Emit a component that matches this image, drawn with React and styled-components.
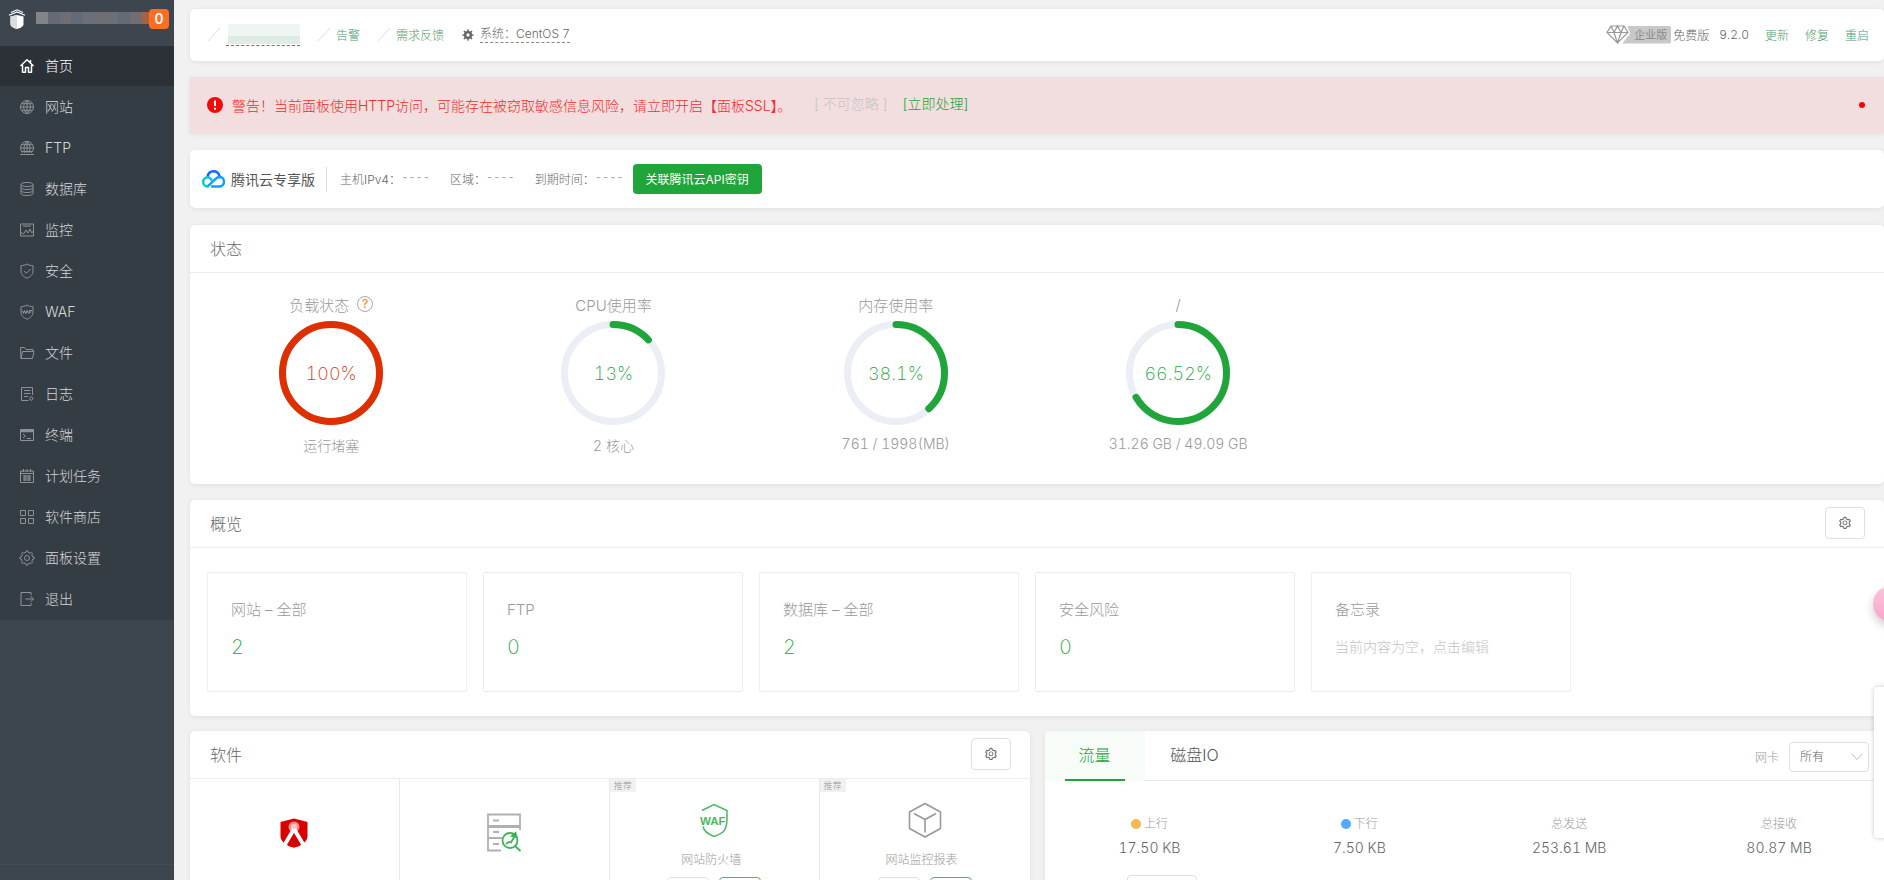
import React from "react";
import styled, { createGlobalStyle } from "styled-components";
import { AiOutlineSetting } from "react-icons/ai";

const COLORS = {
  green: "#20a53a",
  red: "#dd2f00",
  text: "#666",
  muted: "#999",
  light: "#ccc",
  line: "#ededed",
  lilac: "#e8e8f2",
};

const GlobalStyle = createGlobalStyle`
  * {
    box-sizing: border-box;
  }

  body {
    margin: 0;
    background: #f1f1f1;
    color: ${COLORS.text};
    font-family: Inter, "Noto Sans CJK SC", sans-serif;
    font-size: 12px;
    font-weight: 300;
    font-variant-numeric: tabular-nums;
  }

  a {
    color: inherit;
    text-decoration: none;
  }

  button,
  select {
    font: inherit;
    color: inherit;
  }

  h2,
  p,
  ul,
  dl,
  dd {
    margin: 0;
    padding: 0;
  }
`;

const Layout = styled.div`
  display: flex;
  height: 100vh;
`;

/* sidebar */

const Sidebar = styled.aside`
  display: flex;
  flex-direction: column;
  flex: none;
  width: 174px;
  background: #3d454e;
`;

const SidebarHeader = styled.div`
  display: flex;
  align-items: flex-start;
  height: 46px;
  padding: 9px 5px 0 8px;
`;

const Mosaic = styled.div`
  display: flex;
  flex: 1;
  height: 12px;
  margin: 3px 0 0 10px;

  i {
    flex: 1;
    background: #6b7077;
  }
  i:nth-child(1) {
    background: #838487;
  }
  i:nth-child(2n) {
    background: #646b76;
  }
  i:nth-child(3n) {
    background: #706d73;
  }
  i:last-child {
    flex: 0 0 7px;
    background: #a9623f;
  }
`;

const MessageCount = styled.span`
  width: 20px;
  height: 20px;
  border-radius: 4px;
  background: #ff6c24;
  color: #fff;
  font-size: 14px;
  font-weight: 600;
  line-height: 20px;
  text-align: center;
`;

const Menu = styled.ul`
  list-style: none;
  background: #353d44;
`;

const MenuLink = styled.a`
  display: flex;
  align-items: center;
  gap: 10px;
  height: 40px;
  margin-bottom: 1px;
  padding-left: 19px;
  background: ${({ $active }) => ($active ? "#2c3138" : "transparent")};
  color: ${({ $active }) => ($active ? "#fff" : "#d6d7d9")};
  font-size: 14px;

  svg {
    width: 16px;
    height: 16px;
    color: ${({ $active }) => ($active ? "#fff" : "#8f9396")};
  }

  span {
    padding-bottom: 2px;
  }
`;

const SidebarFooter = styled.div`
  height: 16px;
  margin-top: auto;
  border-top: 1px solid #404d56;
`;

/* shared */

const Main = styled.main`
  flex: 1;
  min-width: 0;
  padding: 9px 0 0 16px;
  overflow-y: auto;
  scrollbar-width: none;
`;

const Card = styled.section`
  margin-bottom: 16px;
  border-radius: 5px;
  background: #fff;
  box-shadow: 0 1px 5px rgba(0, 0, 0, 0.08);
`;

const CardHeader = styled.header`
  display: flex;
  align-items: center;
  justify-content: space-between;
  height: 48px;
  padding: 0 19px 2px 20px;
  border-bottom: 1px solid ${COLORS.line};

  h2 {
    font-size: 16px;
    font-weight: 300;
  }
`;

const SettingButton = styled.button`
  display: flex;
  align-items: center;
  justify-content: center;
  width: 40px;
  height: 32px;
  padding: 0;
  border: 1px solid #dcdfe6;
  border-radius: 4px;
  background: #fff;
  font-size: 14px;
`;

/* top bar */

const TopBar = styled(Card)`
  display: flex;
  align-items: center;
  justify-content: space-between;
  height: 52px;
  padding: 0 15px 0 18px;
`;

const TopGroup = styled.div`
  display: flex;
  align-items: center;
  gap: ${({ $right }) => ($right ? "16px" : "18px")};
  padding-bottom: 1px;
  color: #4fa06a;
`;

const TopItem = styled.div`
  display: flex;
  align-items: center;
  gap: 6px;
  color: ${({ $gray }) => ($gray ? COLORS.text : "#4fa06a")};
`;

const Account = styled.span`
  width: 74px;
  height: 22px;
  border-bottom: 1px dashed ${COLORS.green};
  background: linear-gradient(#eff5f1 0 60%, #dfece3 60%) no-repeat 2px 0 / 72px 20px;
`;

const System = styled.span`
  border-bottom: 1px dashed #888;
  line-height: 16px;
`;

const Edition = styled.div`
  display: flex;
  align-items: center;
  margin-right: -6px;
`;

const EditionTag = styled.span`
  height: 18px;
  margin: 0 2px 0 -7px;
  padding: 0 4px 0 12px;
  border-radius: 0 2px 2px 0;
  background: #c8c8c8;
  clip-path: polygon(5px 0, 100% 0, 100% 100%, 0 100%, 8px 45%);
  color: #888;
  font-size: 11px;
  font-weight: 400;
  line-height: 18px;
`;

/* warning */

const Alert = styled.div`
  display: flex;
  align-items: center;
  height: 56px;
  margin-bottom: 17px;
  padding: 0 19px 0 17px;
  background: #f2dede;
  box-shadow: 0 1px 5px rgba(0, 0, 0, 0.08);
  color: #f22b2b;
  font-size: 14px;

  p {
    margin: 0 22px 0 9px;
  }
`;

const Ignore = styled.span`
  margin-right: 14px;
  padding-bottom: 4px;
  color: #c4c4c4;
`;

const Handle = styled.a`
  padding-bottom: 4px;
  color: ${COLORS.green};
`;

const RedDot = styled.i`
  width: 6px;
  height: 6px;
  margin-left: auto;
  border-radius: 50%;
  background: #f00;
`;

/* tencent cloud */

const CloudBar = styled(Card)`
  display: flex;
  align-items: center;
  height: 58px;
  margin-bottom: 17px;
  padding: 0 12px;
`;

const CloudName = styled.strong`
  margin-left: 6px;
  padding-right: 11px;
  border-right: 1px solid #ddd;
  color: #555;
  font-size: 14px;
  font-weight: 400;
  line-height: 25px;
`;

const CloudFields = styled.dl`
  display: flex;
  gap: 20px;
  margin: 0 9px 0 13px;
  padding-bottom: 2px;

  div {
    display: flex;
    align-items: center;
  }
  dd {
    color: #aaa;
    font-family: "Liberation Mono", monospace;
  }
`;

const BindButton = styled.button`
  height: 30px;
  padding: 0 13px 1px;
  border: 0;
  border-radius: 4px;
  background: ${COLORS.green};
  color: #fff;
  font-weight: 400;
`;

/* status */

const Gauges = styled.div`
  display: grid;
  grid-template-columns: repeat(6, 1fr);
  padding: 19px 0 26px;
`;

const Gauge = styled.div`
  display: flex;
  flex-direction: column;
  align-items: center;
  height: 166px;
  color: ${COLORS.muted};
  font-size: 14px;
`;

const GaugeTitle = styled.div`
  display: flex;
  align-items: center;
  gap: 8px;
  height: 24px;
  font-size: 15px;
`;

const Help = styled.a`
  width: 16px;
  height: 16px;
  border: 1px solid #aaa;
  border-radius: 50%;
  color: #ff8d1a;
  font-size: 12px;
  font-weight: 500;
  line-height: 14px;
  text-align: center;
`;

const Ring = styled.div`
  display: grid;
  place-items: center;
  width: 104px;
  height: 104px;
  margin: 5px 0 10px;
  color: ${({ $color }) => $color};
  font-size: 18px;
  font-weight: 200;

  svg,
  span {
    grid-area: 1 / 1;
  }
`;

/* overview */

const Overview = styled.div`
  display: flex;
  gap: 16px;
  padding: 24px 17px;
`;

const OverviewBox = styled.div`
  width: 260px;
  height: 120px;
  padding: 24px 23px;
  border: 1px solid ${COLORS.line};
  border-radius: 2px;
  color: ${COLORS.muted};
  font-size: 15px;
  line-height: 26px;

  a {
    display: block;
    margin-top: 11px;
  }
`;

const Count = styled.a`
  color: ${COLORS.green};
  font-size: 20px;
  font-weight: 200;
`;

const Memo = styled.a`
  color: #c4c4c4;
  font-size: 14px;
`;

/* bottom row */

const BottomRow = styled.div`
  display: grid;
  grid-template-columns: 1fr 1fr;
  gap: 15px;
  margin-top: -1px;
`;

const SoftGrid = styled.div`
  display: grid;
  grid-template-columns: repeat(4, 1fr);
`;

const SoftItem = styled.div`
  position: relative;
  display: flex;
  flex-direction: column;
  align-items: center;
  height: 210px;
  padding-top: ${({ $plain }) => ($plain ? "33px" : "20px")};
  border-right: 1px solid ${COLORS.lilac};
  border-bottom: 1px solid ${COLORS.lilac};
  color: ${COLORS.muted};

  &:nth-child(4n) {
    border-right: 0;
  }

  p {
    width: ${({ $plain }) => ($plain ? "112px" : "auto")};
    margin-top: ${({ $plain }) => ($plain ? "23px" : "9px")};
    padding-right: 6px;
    line-height: 20px;
  }
`;

const Recommend = styled.span`
  position: absolute;
  top: 0;
  left: 0;
  width: 26px;
  background: #f1f1f1;
  color: #999;
  font-size: 9px;
  line-height: 13px;
  text-align: center;
`;

const SoftActions = styled.div`
  display: flex;
  gap: 10px;
  margin-top: 7px;
`;

const SoftButton = styled.button`
  width: 42px;
  height: 24px;
  padding: 0;
  border: 1px solid ${({ $green }) => ($green ? "#4fb563" : "#dcdfe6")};
  border-radius: 4px;
  background: #fff;
  color: ${({ $green }) => ($green ? COLORS.green : COLORS.text)};
`;

const Tabs = styled.div`
  display: flex;
  height: 50px;
  border-bottom: 1px solid ${COLORS.lilac};
`;

const Tab = styled.button`
  width: 100px;
  height: 50px;
  padding: 0 20px;
  border: 0;
  border-radius: 5px 0 0 0;
  background: ${({ $active }) => ($active ? "#f7fcf8" : "none")};
  color: ${({ $active }) => ($active ? COLORS.green : "#555")};
  font-size: 16px;

  span {
    display: block;
    border-bottom: 2px solid ${({ $active }) => ($active ? COLORS.green : "transparent")};
    line-height: 48px;
  }
`;

const NetFilter = styled.label`
  display: flex;
  align-items: center;
  gap: 10px;
  margin: 2px 15px 0 auto;
  color: ${COLORS.muted};
`;

const SelectBox = styled.span`
  display: grid;
  align-items: center;

  select,
  svg {
    grid-area: 1 / 1;
  }

  select {
    width: 80px;
    height: 30px;
    padding: 0 10px;
    border: 1px solid #dcdfe6;
    border-radius: 4px;
    background: #fff;
    color: ${COLORS.text};
    appearance: none;
  }

  svg {
    justify-self: end;
    margin-right: 6px;
    pointer-events: none;
  }
`;

const Stats = styled.dl`
  display: grid;
  grid-template-columns: repeat(4, 1fr);
  padding-top: 31px;
  text-align: center;
  line-height: 24px;

  dt {
    display: flex;
    align-items: center;
    justify-content: center;
    gap: 3px;
    color: ${COLORS.muted};
  }

  dd {
    font-size: 14px;
  }
`;

const Dot = styled.i`
  width: 10px;
  height: 10px;
  border-radius: 50%;
  background: ${({ $color }) => $color};
`;

const UnitSelect = styled.select`
  width: 70px;
  height: 28px;
  margin: 15px 0 200px 82px;
  border: 1px solid #dcdfe6;
  border-radius: 4px;
  background: #fff;
  appearance: none;
`;

/* floating helpers on the right edge */

const FloatBall = styled.button`
  position: fixed;
  top: 586px;
  right: -25px;
  width: 36px;
  height: 36px;
  border: 0;
  border-radius: 50%;
  background: linear-gradient(#fcc3dc, #f9a6cb);
  box-shadow: 0 4px 10px rgba(0, 0, 0, 0.2);
`;

const FloatPanel = styled.div`
  position: fixed;
  top: 687px;
  right: -30px;
  width: 40px;
  height: 151px;
  border-radius: 4px;
  background: #fff;
  box-shadow: 0 0 5px rgba(0, 0, 0, 0.22);
`;

const Svg = ({ size = 16, children, ...rest }) => (
  <svg
    width={size}
    height={size}
    viewBox="0 0 16 16"
    fill="none"
    stroke="currentColor"
    strokeWidth="1"
    strokeLinejoin="round"
    aria-hidden="true"
    {...rest}
  >
    {children}
  </svg>
);

// eight-toothed gear outline around (8, 8)
const gearPath = (outer, inner) => {
  const points = [];
  for (let i = 0; i < 8; i++) {
    [-0.25, -0.13, 0.13, 0.25].forEach((shift, j) => {
      const angle = ((i + shift) * Math.PI) / 4;
      const r = j === 0 || j === 3 ? inner : outer;
      points.push(`${(8 + r * Math.sin(angle)).toFixed(2)} ${(8 - r * Math.cos(angle)).toFixed(2)}`);
    });
  }
  return `M${points.join("L")}z`;
};

const SHIELD = "M8 1c2 1.2 4 1.6 6 1.7V8c0 3.600-2.500 5.800-6 7.200C4.500 13.800 2 11.600 2 8V2.700C4 2.600 6 2.200 8 1z";

const icons = {
  home: (
    <g strokeWidth="1.500">
      <path d="M1.500 8L8 1.700 14.500 8M3.500 7v7.200h3V9.500h3v4.700h3V7M11.500 2v2.500" />
    </g>
  ),
  site: (
    <path d="M8 1.500a6.500 6.500 0 100 13 6.500 6.500 0 000-13zM8 1.500v13M1.500 8h13M2.500 4.700h11M2.500 11.300h11M8 1.500c-4.500 3.500-4.500 9.500 0 13M8 1.500c4.500 3.500 4.500 9.500 0 13" />
  ),
  ftp: (
    <path d="M4 13a6.500 6.500 0 118 0M8 1.500v11.500M1.500 8h13M2.500 4.700h11M3 11.500h10M8 1.500C4.500 4.500 4.500 10 6 13M8 1.500c3.500 3 3.500 8.500 2 11.500M1 14.500h14" />
  ),
  database: (
    <path d="M2 3.500C2 .8 14 .8 14 3.500S2 6.200 2 3.500zM2 3.500v9c0 2.700 12 2.700 12 0v-9M2 6.500c0 2.700 12 2.700 12 0M2 9.500c0 2.700 12 2.700 12 0" />
  ),
  monitor: <path d="M1.500 2h13v12h-13zM4 4h8M2 10.500l2.500 1.500L7 8l2 3 2-4 1.500 3.500 2-1" />,
  safe: <path d={`${SHIELD}M5 8l2.300 2.300L11.500 6`} />,
  waf: <path d={`${SHIELD}M3.500 6.500l1 3 1-3 1 3 1-3M7.500 9.500L8.500 6.500l1 3M10.500 9.500v-3h2.500M10.500 8h2`} />,
  files: <path d="M2 13.500L1.500 2.500h4l1.500 2h7v2M2 13.500L3.500 6.500h11.500L13.500 13.500z" />,
  logs: (
    <g>
      <path d="M13.500 9V1.500h-11v13h7M5 4.500h6.500M5 7.500h6.500M5 10.500h4" />
      <circle cx="12.300" cy="12.500" r="1.700" />
    </g>
  ),
  terminal: (
    <g>
      <path d="M1.500 2.500h13v11h-13zM4 7l2.500 2L4 11M8 11.500h4" />
      <path d="M1.500 4h13" strokeWidth="2.500" />
    </g>
  ),
  cron: <path d="M1.500 3h13v11.500h-13zM1.500 5.500h13M4.500 1v3M8 1v3M11.500 1v3M4 8h8M4 10h8M4 12h8M6 7v6M10 7v6" />,
  store: <path d="M1.500 1.500h5v5h-5zM9.500 1.500h5v5h-5zM1.500 9.500h5v5h-5zM9.500 9.500h5v5h-5z" />,
  setting: (
    <g>
      <path d={gearPath(7.2, 5.8)} />
      <circle cx="8" cy="8" r="2.500" />
    </g>
  ),
  exit: <path d="M12 4V1.500H2v13h10V12M6.500 8h8M11.500 5l3 3-3 3" />,
};

const MENU = [
  ["home", "首页"],
  ["site", "网站"],
  ["ftp", "FTP"],
  ["database", "数据库"],
  ["monitor", "监控"],
  ["safe", "安全"],
  ["waf", "WAF"],
  ["files", "文件"],
  ["logs", "日志"],
  ["terminal", "终端"],
  ["cron", "计划任务"],
  ["store", "软件商店"],
  ["setting", "面板设置"],
  ["exit", "退出"],
];

const GAUGES = [
  { title: "负载状态", percent: 100, desc: "运行堵塞", color: COLORS.red, help: true },
  { title: "CPU使用率", percent: 13, desc: "2 核心", color: COLORS.green },
  { title: "内存使用率", percent: 38.1, desc: "761 / 1998(MB)", color: COLORS.green },
  { title: "/", percent: 66.52, desc: "31.26 GB / 49.09 GB", color: COLORS.green },
];

const OVERVIEW = [
  ["网站 – 全部", 2],
  ["FTP", 0],
  ["数据库 – 全部", 2],
  ["安全风险", 0],
];

const STATS = [
  ["上行", "17.50 KB", "#f7b851"],
  ["下行", "7.50 KB", "#52a9ff"],
  ["总发送", "253.61 MB"],
  ["总接收", "80.87 MB"],
];

const Logo = () => (
  <svg width="18" height="20" viewBox="0 0 18 20" aria-hidden="true">
    <path d="M2.500 7.500L9 6l6.500 1.500V15c0 2.500-3 4-6.500 5-3.500-1-6.500-2.500-6.500-5z" fill="#fff" />
    <path d="M2.500 7.500L9 6v14c-3.500-1-6.500-2.500-6.500-5z" fill="#ddd" />
    <path d="M3 3.500L9 .8l6 2.700M1 6.200L9 3l8 3.200" fill="none" stroke="#fff" strokeWidth="1.200" />
  </svg>
);

const Slash = () => (
  <svg width="12" height="13" viewBox="0 0 12 13" aria-hidden="true">
    <path d="M0 13L12 0" stroke="#ddd" strokeWidth="1" />
  </svg>
);

const Diamond = () => (
  <svg width="23" height="19" viewBox="0 0 23 19" fill="none" stroke="#999" strokeWidth="1.200" aria-hidden="true">
    <path d="M5 1h13l4 6.500L11.500 18 1 7.500zM1 7.500h21M5 1l3 6.500L11.500 18 15 7.500 18 1M8 7.500L11.500 1 15 7.500" />
  </svg>
);

const CloudLogo = () => (
  <svg width="23" height="18" viewBox="0 0 23 18" fill="none" strokeWidth="2.400" strokeLinecap="round" aria-hidden="true">
    <path d="M5.500 7C6 3.500 8.500 1.300 11.500 1.300c3 0 5.300 1.900 6 4.700" stroke="#0a6cff" />
    <path d="M10 16.500h7.500c6 0 5.800-9.300.3-9.500-2 0-3 .6-4.300 1.900L6 16.200" stroke="#0aa0ff" />
    <path d="M10.500 11L8.800 9C5.500 5.500 1.200 8.200 1.200 12c0 2.700 2 4.500 4.300 4.500" stroke="#00c8dc" />
  </svg>
);

const ProgressRing = ({ percent, color }) => {
  const length = 2 * Math.PI * 48.5;

  return (
    <svg width="104" height="104" viewBox="0 0 104 104" fill="none" strokeWidth="7" aria-hidden="true">
      <circle cx="52" cy="52" r="48.500" stroke="#ebeef5" />
      <circle
        cx="52"
        cy="52"
        r="48.500"
        stroke={color}
        strokeLinecap="round"
        strokeDasharray={`${(length * percent) / 100} ${length}`}
        transform="rotate(-90 52 52)"
      />
    </svg>
  );
};

const ThreatIcon = () => (
  <svg width="42" height="42" viewBox="0 0 42 42" aria-hidden="true">
    <path d="M21 6.500l13.500 3.500v14c0 6-6 9.500-13.500 11.500C13.500 33.500 7.500 30 7.500 24V10z" fill="#d90000" />
    <circle cx="21" cy="15" r="5.500" fill="#f08a8a" />
    <circle cx="21" cy="15" r="3.200" fill="#f8c4c4" />
    <path d="M21 17l9.500 16M21 17l-9.500 16" stroke="#fff" strokeWidth="4" />
    <path d="M21 23.500l6 10.500-6 1.500-6-1.500z" fill="#d90000" />
  </svg>
);

const ScanIcon = () => (
  <svg width="42" height="42" viewBox="0 0 42 42" fill="none" stroke="#b0b0b0" strokeWidth="1.800" aria-hidden="true">
    <path d="M18 38.500H5v-36h32V18M5 14h32M5 15h32M5 26h14M10 8.500h6M10 20h6M10 32h6" />
    <g stroke="#3cb356">
      <circle cx="27" cy="28.500" r="7.500" />
      <path d="M32 34l5.500 5M23 32l3-2 2 .5 3.500-6" />
      <path d="M29 24l3.500-3 1 4z" fill="#3cb356" />
    </g>
  </svg>
);

const WafIcon = () => (
  <svg width="42" height="42" viewBox="0 0 42 42" fill="none" stroke="#4ab860" strokeWidth="1.500" aria-hidden="true">
    <path d="M9 11.500L21 5.500l13 6v8c0 8-1 11-4 13.500-2.500 2-6 3.500-9 4.500-5-2-10-5-11-10" />
    <text x="7" y="25.500" fill="#4ab860" stroke="none" fontFamily="Liberation Sans" fontSize="11.500" fontWeight="700">
      WAF
    </text>
  </svg>
);

const CubeIcon = () => (
  <svg width="42" height="42" viewBox="0 0 42 42" fill="none" stroke="#999" strokeWidth="1.600" strokeLinejoin="round" aria-hidden="true">
    <path d="M21 4.500l15.500 8.500v16.500L21 38 5.500 29.500V13zM10 14.500l11 6 11-6M21 20.500V33.500" />
  </svg>
);

const SOFTWARE = [
  { name: "微步木马检测", icon: <ThreatIcon />, plain: true },
  { name: "堡塔漏洞检测", icon: <ScanIcon />, plain: true },
  { name: "网站防火墙", icon: <WafIcon /> },
  { name: "网站监控报表", icon: <CubeIcon /> },
];

const SideMenu = () => (
  <Sidebar>
    <SidebarHeader>
      <Logo />
      <Mosaic>
        {Array.from({ length: 10 }, (_, i) => (
          <i key={i} />
        ))}
      </Mosaic>
      <MessageCount>0</MessageCount>
    </SidebarHeader>
    <Menu>
      {MENU.map(([icon, label]) => (
        <li key={icon}>
          <MenuLink href="#" $active={icon === "home"}>
            <Svg>{icons[icon]}</Svg>
            <span>{label}</span>
          </MenuLink>
        </li>
      ))}
    </Menu>
    <SidebarFooter />
  </Sidebar>
);

const Setting = () => (
  <SettingButton aria-label="设置">
    <AiOutlineSetting />
  </SettingButton>
);

const Header = () => (
  <TopBar>
    <TopGroup>
      <TopItem>
        <Slash />
        <Account />
      </TopItem>
      <TopItem>
        <Slash />
        <a href="#">告警</a>
      </TopItem>
      <TopItem>
        <Slash />
        <a href="#">需求反馈</a>
      </TopItem>
      <TopItem $gray>
        <Svg size={12}>
          <path d={gearPath(7.8, 5.6)} fill="currentColor" stroke="none" />
          <circle cx="8" cy="8" r="2.200" fill="#fff" stroke="none" />
        </Svg>
        <System>系统：CentOS 7</System>
      </TopItem>
    </TopGroup>
    <TopGroup $right>
      <Edition>
        <Diamond />
        <EditionTag>企业版</EditionTag>
        <TopItem $gray>免费版</TopItem>
      </Edition>
      <TopItem $gray>9.2.0</TopItem>
      <a href="#">更新</a>
      <a href="#">修复</a>
      <a href="#">重启</a>
    </TopGroup>
  </TopBar>
);

const Warning = () => (
  <Alert>
    <svg width="16" height="16" viewBox="0 0 16 16" aria-hidden="true">
      <circle cx="8" cy="8" r="8" fill="#f00a0a" />
      <path d="M8 3.500v5.500M8 10.800v2" stroke="#fff" strokeWidth="2" />
    </svg>
    <p>警告！当前面板使用HTTP访问，可能存在被窃取敏感信息风险，请立即开启【面板SSL】。</p>
    <Ignore>[ 不可忽略 ]</Ignore>
    <Handle href="#">[立即处理]</Handle>
    <RedDot />
  </Alert>
);

const TencentCloud = () => (
  <CloudBar>
    <CloudLogo />
    <CloudName>腾讯云专享版</CloudName>
    <CloudFields>
      {["主机IPv4：", "区域：", "到期时间："].map((label) => (
        <div key={label}>
          <dt>{label}</dt>
          <dd>----</dd>
        </div>
      ))}
    </CloudFields>
    <BindButton>关联腾讯云API密钥</BindButton>
  </CloudBar>
);

const Status = () => (
  <Card>
    <CardHeader>
      <h2>状态</h2>
    </CardHeader>
    <Gauges>
      {GAUGES.map(({ title, percent, desc, color, help }) => (
        <Gauge key={title}>
          <GaugeTitle>
            {title}
            {help && <Help href="#">?</Help>}
          </GaugeTitle>
          <Ring $color={color}>
            <ProgressRing percent={percent} color={color} />
            <span>{percent}%</span>
          </Ring>
          {desc}
        </Gauge>
      ))}
    </Gauges>
  </Card>
);

const Summary = () => (
  <Card>
    <CardHeader>
      <h2>概览</h2>
      <Setting />
    </CardHeader>
    <Overview>
      {OVERVIEW.map(([label, count]) => (
        <OverviewBox key={label}>
          <p>{label}</p>
          <Count href="#">{count}</Count>
        </OverviewBox>
      ))}
      <OverviewBox>
        <p>备忘录</p>
        <Memo href="#">当前内容为空，点击编辑</Memo>
      </OverviewBox>
    </Overview>
  </Card>
);

const Software = () => (
  <Card>
    <CardHeader>
      <h2>软件</h2>
      <Setting />
    </CardHeader>
    <SoftGrid>
      {SOFTWARE.map(({ name, icon, plain }) => (
        <SoftItem key={name} $plain={plain}>
          {!plain && <Recommend>推荐</Recommend>}
          {icon}
          <p>{name}</p>
          {!plain && (
            <SoftActions>
              <SoftButton>预览</SoftButton>
              <SoftButton $green>购买</SoftButton>
            </SoftActions>
          )}
        </SoftItem>
      ))}
    </SoftGrid>
  </Card>
);

const Traffic = () => (
  <Card>
    <Tabs>
      <Tab $active>
        <span>流量</span>
      </Tab>
      <Tab>
        <span>磁盘IO</span>
      </Tab>
      <NetFilter>
        网卡
        <SelectBox>
          <select>
            <option>所有</option>
          </select>
          <svg width="12" height="8" viewBox="0 0 12 8" fill="none" stroke="#bbb" aria-hidden="true">
            <path d="M1 1l5 5.500L11 1" />
          </svg>
        </SelectBox>
      </NetFilter>
    </Tabs>
    <Stats>
      {STATS.map(([label, value, color]) => (
        <div key={label}>
          <dt>
            {color && <Dot $color={color} />}
            {label}
          </dt>
          <dd>{value}</dd>
        </div>
      ))}
    </Stats>
    <UnitSelect aria-label="单位">
      <option>KB/s</option>
    </UnitSelect>
  </Card>
);

const App = () => (
  <>
    <GlobalStyle />
    <Layout>
      <SideMenu />
      <Main>
        <Header />
        <Warning />
        <TencentCloud />
        <Status />
        <Summary />
        <BottomRow>
          <Software />
          <Traffic />
        </BottomRow>
      </Main>
      <FloatBall aria-label="客服" />
      <FloatPanel />
    </Layout>
  </>
);

export default App;
